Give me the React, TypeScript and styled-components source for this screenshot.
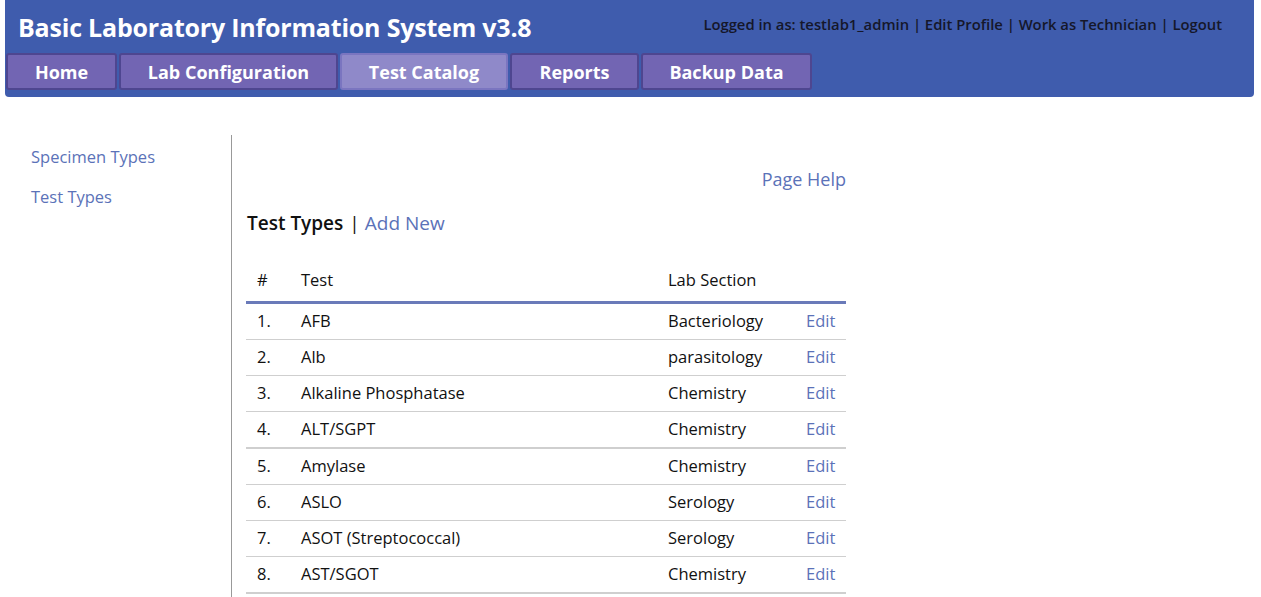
import React from "react";
import styled, { createGlobalStyle } from "styled-components";

const Global = createGlobalStyle`
  html, body { margin: 0; padding: 0; background: #fff; }
  body { font-family: "Open Sans", "Noto Sans", sans-serif; color: #111; }
  a { text-decoration: none; }
`;

const Page = styled.div`
  padding: 0 7px 0 5px;
`;

const Header = styled.header`
  background: #3f5cad;
  border-radius: 0 0 4px 4px;
  padding: 0 0 7px 1px;
`;

const TopRow = styled.div`
  display: flex;
  align-items: center;
  justify-content: space-between;
  height: 53px;
  padding: 0 32px 0 12px;
`;

const Title = styled.h1`
  margin: 0;
  font-size: 25px;
  font-weight: 700;
  color: #fff;
  letter-spacing: -0.2px;
`;

const UserBar = styled.div`
  font-size: 14.8px;
  color: #15172a;
  font-weight: 600;
  margin-top: -5px;
`;

const Tabs = styled.nav`
  display: flex;
  gap: 2px;
`;

const Tab = styled.a<{ $active?: boolean; $w: number }>`
  display: flex;
  align-items: center;
  justify-content: center;
  box-sizing: border-box;
  height: 37px;
  width: ${(p) => p.$w}px;
  border-radius: 3px;
  border: 2px solid ${(p) => (p.$active ? "#7a75c0" : "#4e4690")};
  background: ${(p) => (p.$active ? "#8f89c9" : "#7265b3")};
  color: #fff;
  font-size: 18px;
  font-weight: 700;
`;

const Body = styled.div`
  display: flex;
  margin-top: 38px;
`;

const Side = styled.aside`
  width: 227px;
  box-sizing: border-box;
  border-right: 1px solid #999;
  padding: 10px 0 0 26px;
  display: flex;
  flex-direction: column;
  gap: 16px;
  min-height: 470px;
`;

const SideLink = styled.a`
  color: #5b72b8;
  font-size: 16.5px;
  line-height: 24px;
`;

const Content = styled.main`
  width: 600px;
  margin-left: 14px;
  padding-top: 32px;
`;

const HelpRow = styled.div`
  text-align: right;
`;

const Link = styled.a`
  color: #5b72b8;
`;

const HelpLink = styled(Link)`
  font-size: 18px;
`;

const Heading = styled.div`
  margin-top: 19px;
  font-size: 19px;
  color: #111;
  padding-left: 1px;
`;

const Strong = styled.span`
  font-weight: 600;
`;

const Sep = styled.span`
  margin: 0 5px 0 6px;
`;

const Table = styled.table`
  margin-top: 24px;
  width: 600px;
  table-layout: fixed;
  border-collapse: collapse;
  font-size: 16.5px;
`;

const Th = styled.th<{ $w: number }>`
  text-align: left;
  font-weight: 400;
  height: 38px;
  padding: 0 0 3px 11px;
  border-bottom: 3px solid #6a7ab9;
  width: ${(p) => p.$w - 11}px;
`;

const Tr = styled.tr<{ $thick?: boolean }>`
  border-bottom: ${(p) => (p.$thick ? "2px" : "1px")} solid #cfcfcf;
`;

const Td = styled.td`
  height: 32px;
  padding: 0 0 3px 11px;
  white-space: nowrap;
`;

const EditLink = styled(Link)`
  font-size: 16.5px;
`;

const rows = [
  ["AFB", "Bacteriology"],
  ["Alb", "parasitology"],
  ["Alkaline Phosphatase", "Chemistry"],
  ["ALT/SGPT", "Chemistry"],
  ["Amylase", "Chemistry"],
  ["ASLO", "Serology"],
  ["ASOT (Streptococcal)", "Serology"],
  ["AST/SGOT", "Chemistry"],
];

const tabs: [string, number, boolean?][] = [
  ["Home", 111],
  ["Lab Configuration", 219],
  ["Test Catalog", 168, true],
  ["Reports", 129],
  ["Backup Data", 171],
];

export default function App() {
  return (
    <Page>
      <Global />
      <Header>
        <TopRow>
          <Title>Basic Laboratory Information System v3.8</Title>
          <UserBar>
            Logged in as: testlab1_admin | Edit Profile | Work as Technician | Logout
          </UserBar>
        </TopRow>
        <Tabs>
          {tabs.map(([t, w, a]) => (
            <Tab key={t} $w={w} $active={a}>
              {t}
            </Tab>
          ))}
        </Tabs>
      </Header>
      <Body>
        <Side>
          <SideLink>Specimen Types</SideLink>
          <SideLink>Test Types</SideLink>
        </Side>
        <Content>
          <HelpRow>
            <HelpLink>Page Help</HelpLink>
          </HelpRow>
          <Heading>
            <Strong>Test Types</Strong>
            <Sep>|</Sep>
            <Link>Add New</Link>
          </Heading>
          <Table>
            <thead>
              <tr>
                <Th $w={44}>#</Th>
                <Th $w={367}>Test</Th>
                <Th $w={138}>Lab Section</Th>
                <Th $w={51}></Th>
              </tr>
            </thead>
            <tbody>
              {rows.map(([t, s], i) => (
                <Tr key={t} $thick={i === 3 || i === 7}>
                  <Td>{i + 1}.</Td>
                  <Td>{t}</Td>
                  <Td>{s}</Td>
                  <Td>
                    <EditLink>Edit</EditLink>
                  </Td>
                </Tr>
              ))}
            </tbody>
          </Table>
        </Content>
      </Body>
    </Page>
  );
}
